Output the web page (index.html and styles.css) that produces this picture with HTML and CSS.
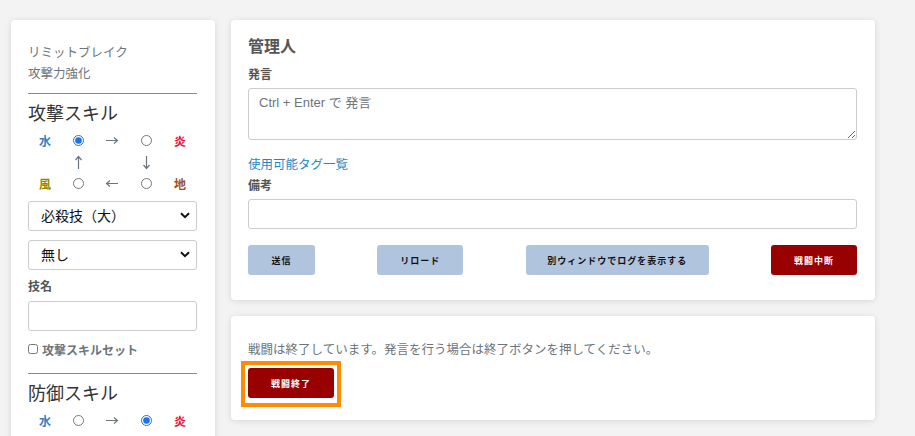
FILE: index.html
```html
<!DOCTYPE html>
<html lang="ja">
<head>
<meta charset="utf-8">
<link rel="stylesheet" href="styles.css">
</head>
<body>
<div class="page">
  <aside class="card side">
    <div class="muted">リミットブレイク</div>
    <div class="muted">攻撃力強化</div>
    <hr class="rule">
    <h2 class="skill-title">攻撃スキル</h2>
    <div class="elem-grid">
      <span class="el water">水</span><span class="cell"><input type="radio" name="a" checked></span>
      <svg class="arr-h" viewBox="0 0 14 9" aria-label="→"><path d="M1 4.5H12.5M9 1.5L12.5 4.5L9 7.5"/></svg>
      <span class="cell"><input type="radio" name="a"></span><span class="el fire">炎</span>
      <span></span>
      <svg class="arr-v" viewBox="0 0 9 15" aria-label="↑"><path d="M4.5 14V1.5M1.5 5L4.5 1.5L7.5 5"/></svg>
      <span></span>
      <svg class="arr-v" viewBox="0 0 9 15" aria-label="↓"><path d="M4.5 1V13.5M1.5 10L4.5 13.5L7.5 10"/></svg>
      <span></span>
      <span class="el wind">風</span><span class="cell"><input type="radio" name="a"></span>
      <svg class="arr-h" viewBox="0 0 14 9" aria-label="←"><path d="M13 4.5H1.5M5 1.5L1.5 4.5L5 7.5"/></svg>
      <span class="cell"><input type="radio" name="a"></span><span class="el earth">地</span>
    </div>
    <select class="field sel"><option>必殺技（大）</option></select>
    <select class="field sel"><option>無し</option></select>
    <label class="lbl">技名</label>
    <input class="field" type="text">
    <label class="check"><input type="checkbox"> 攻撃スキルセット</label>
    <hr class="rule rule2">
    <h2 class="skill-title">防御スキル</h2>
    <div class="elem-grid">
      <span class="el water">水</span><span class="cell"><input type="radio" name="d"></span>
      <svg class="arr-h" viewBox="0 0 14 9" aria-label="→"><path d="M1 4.5H12.5M9 1.5L12.5 4.5L9 7.5"/></svg>
      <span class="cell"><input type="radio" name="d" checked></span><span class="el fire">炎</span>
    </div>
  </aside>
  <main class="main">
    <section class="card panel">
      <h1 class="name">管理人</h1>
      <label class="lbl">発言</label>
      <textarea class="field area" placeholder="Ctrl + Enter で 発言"></textarea>
      <a class="taglink" href="#">使用可能タグ一覧</a>
      <label class="lbl">備考</label>
      <input class="field" type="text">
      <div class="btns">
        <button class="btn b-send">送信</button>
        <button class="btn b-reload">リロード</button>
        <button class="btn b-win">別ウィンドウでログを表示する</button>
        <button class="btn red b-stop">戦闘中断</button>
      </div>
    </section>
    <section class="card panel2">
      <p class="notice">戦闘は終了しています。発言を行う場合は終了ボタンを押してください。</p>
      <span class="focus-ring"><button class="btn red b-end">戦闘終了</button></span>
    </section>
  </main>
</div>
</body>
</html>
```
FILE: styles.css
```css
* { box-sizing: border-box; }
html, body { margin: 0; height: 100%; overflow: hidden; }
body {
  background: #f3f3f3;
  font-family: "Liberation Sans", "Noto Sans CJK JP", sans-serif;
  color: #333;
}
.page {
  display: flex;
  align-items: flex-start;
  gap: 16px;
  padding: 20px 40px 0 11px;
}
.card {
  background: #fff;
  border-radius: 4px;
  box-shadow: 0 1px 6px rgba(0,0,0,0.12);
}
.side {
  width: 204px;
  flex: none;
  padding: 23px 18px 30px 17px;
  min-height: 460px;
}
.muted {
  color: #6c757d;
  font-size: 12.5px;
  line-height: 21px;
}
.rule {
  border: 0;
  border-top: 1px solid #8a8a8a;
  margin: 8px 0 8px;
}
.rule2 { margin-top: 15px; }
.skill-title {
  margin: 0;
  font-size: 18px;
  font-weight: 400;
  line-height: 24px;
  color: #333;
}
.elem-grid {
  display: grid;
  grid-template-columns: repeat(5, 1fr);
  grid-auto-rows: 21.5px;
  align-items: center;
  justify-items: center;
  margin-top: 4px;
  font-size: 12px;
}
.el { font-weight: 700; font-size: 12px; }
.water { color: #3a7fc1; }
.fire { color: #e8103c; }
.wind { color: #8a8a00; }
.earth { color: #a0501e; }
.arr-h, .arr-v {
  fill: none;
  stroke: #6c757d;
  stroke-width: 1.2;
}
.arr-h { width: 14px; height: 9px; }
.arr-v { width: 9px; height: 15px; }
.cell { display: flex; }
.cell input { margin: 0; width: 11px; height: 11px; accent-color: #1a73e8; }
.field {
  display: block;
  width: 100%;
  height: 30px;
  border: 1px solid #ccc;
  border-radius: 3px;
  background: #fff;
  font-family: inherit;
  font-size: 14px;
  color: #111;
}
.sel {
  appearance: none;
  -webkit-appearance: none;
  padding: 0 24px 0 12px;
  background-image: url("data:image/svg+xml;utf8,<svg xmlns='http://www.w3.org/2000/svg' width='10' height='7' viewBox='0 0 10 7'><path d='M1 1.2 L5 5.2 L9 1.2' fill='none' stroke='%23111' stroke-width='2'/></svg>");
  background-repeat: no-repeat;
  background-position: right 6px center;
  margin-top: 9px;
}
.elem-grid + .sel { margin-top: 6px; }
.lbl {
  display: block;
  font-size: 12px;
  font-weight: 700;
  color: #555;
  line-height: 18px;
}
.side .lbl { margin-top: 8px; margin-bottom: 5px; }
.check {
  display: flex;
  align-items: center;
  gap: 4px;
  margin-top: 10px;
  font-size: 12px;
  font-weight: 700;
  color: #6c757d;
}
.check input { margin: 0; width: 10px; height: 10px; }
.main {
  flex: 1;
  display: flex;
  flex-direction: column;
  gap: 16px;
}
.panel { padding: 14px 18px 25px 17px; }
.name {
  margin: 0;
  font-size: 16px;
  font-weight: 700;
  color: #555;
  line-height: 26px;
}
.panel .lbl { margin-top: 6px; margin-bottom: 4px; }
.area {
  height: 52px;
  resize: vertical;
  padding: 3px 10px;
  font-size: 13px;
  color: #555;
}
.area::placeholder { color: #6c757d; }
.taglink {
  display: block;
  margin-top: 15px;
  color: #1a8bc4;
  font-size: 12.5px;
  line-height: 20px;
  text-decoration: none;
}
.panel .taglink + .lbl { margin-top: 2px; }
.btns {
  display: flex;
  justify-content: space-between;
  margin-top: 16px;
}
.btn {
  height: 30px;
  border: 0;
  border-radius: 3px;
  background: #b0c4de;
  color: #111;
  font-family: "Noto Sans CJK JP", sans-serif;
  font-size: 9px;
  font-weight: 700;
  letter-spacing: 1px;
  padding: 0;
}
.btn.red { background: #990000; color: #fff; }
.b-send { width: 67px; }
.b-reload { width: 86px; }
.b-win { width: 183px; }
.b-stop { width: 86px; }
.panel2 { padding: 24px 17px 13px; }
.notice {
  margin: 0 0 1px;
  font-size: 12.5px;
  line-height: 20px;
  color: #6c757d;
}
.focus-ring {
  display: inline-block;
  vertical-align: top;
  margin-left: -7px;
  padding: 3px 3px 5px;
  border: 4px solid #ff8c00;
  background: #fff;
}
.b-end {
  display: block;
  width: 86px;
}
```
